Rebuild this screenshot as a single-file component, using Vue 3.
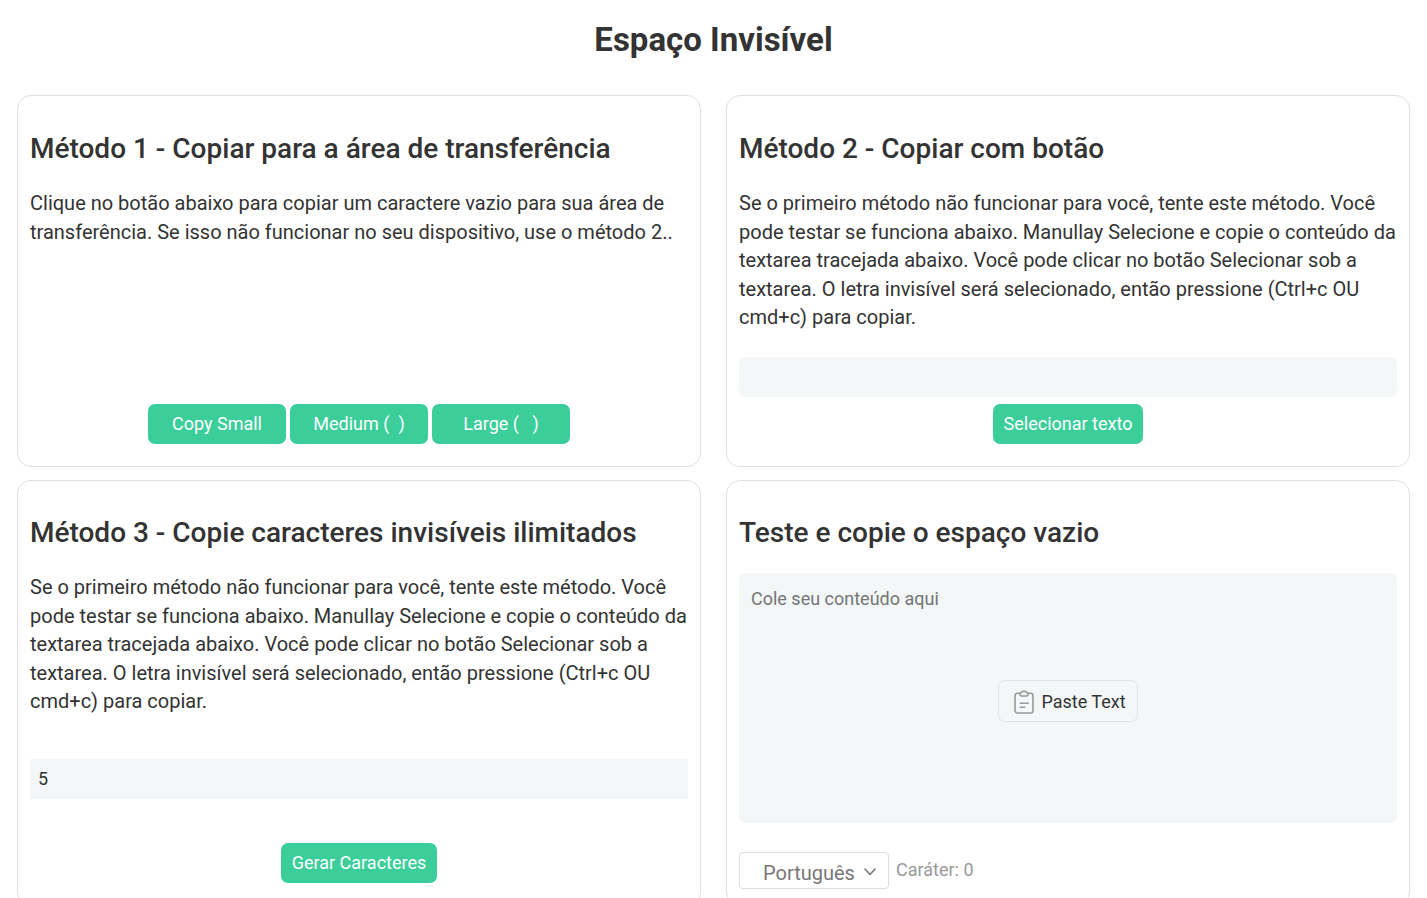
<script setup>
import { ref, computed } from 'vue'

const amount = ref('5')
const content = ref('')
const invisible = ref('\u3164')
const language = ref('pt')
const count = computed(() => content.value.length)
const field = ref(null)

const sizes = [
  { label: 'Copy Small', value: '\u3164' },
  { label: 'Medium (\u00a0\u00a0)', value: '\u3164\u3164' },
  { label: 'Large (\u00a0\u00a0\u00a0)', value: '\u3164\u3164\u3164' },
]

const intro =
  'Se o primeiro método não funcionar para você, tente este método. Você pode testar se funciona abaixo. Manullay Selecione e copie o conteúdo da textarea tracejada abaixo. Você pode clicar no botão Selecionar sob a textarea. O letra invisível será selecionado, então pressione (Ctrl+c OU cmd+c) para copiar.'

function copy(value) {
  navigator.clipboard?.writeText(value)
}
function generate() {
  copy('\u3164'.repeat(Number(amount.value) || 0))
}
async function paste() {
  content.value = (await navigator.clipboard?.readText()) || ''
}
</script>

<template>
  <main class="page">
    <h1>Espaço Invisível</h1>
    <div class="cards">
      <section class="card">
        <h2>Método 1 - Copiar para a área de transferência</h2>
        <p>
          Clique no botão abaixo para copiar um caractere vazio para sua área de
          transferência. Se isso não funcionar no seu dispositivo, use o método 2..
        </p>
        <div class="actions bottom">
          <button
            v-for="size in sizes"
            :key="size.label"
            type="button"
            class="btn sized"
            @click="copy(size.value)"
          >{{ size.label }}</button>
        </div>
      </section>

      <section class="card">
        <h2>Método 2 - Copiar com botão</h2>
        <p>{{ intro }}</p>
        <input
          ref="field"
          v-model="invisible"
          class="field rounded spaced"
          type="text"
          readonly
          aria-label="Letra invisível"
        />
        <div class="actions near">
          <button type="button" class="btn" @click="field.select()">Selecionar texto</button>
        </div>
      </section>

      <section class="card lower">
        <h2>Método 3 - Copie caracteres invisíveis ilimitados</h2>
        <p>{{ intro }}</p>
        <input v-model="amount" class="field far" type="text" aria-label="Quantidade" />
        <div class="actions">
          <button type="button" class="btn" @click="generate">Gerar Caracteres</button>
        </div>
      </section>

      <section class="card lower">
        <h2>Teste e copie o espaço vazio</h2>
        <div class="tester">
          <textarea
            v-model="content"
            placeholder="Cole seu conteúdo aqui"
            aria-label="Teste"
          ></textarea>
          <button type="button" class="paste" @click="paste">
            <svg viewBox="0 0 20 24" width="20" height="24" aria-hidden="true">
              <path d="M5 3.2H3.4A2.4 2.4 0 0 0 1 5.6v15A2.4 2.4 0 0 0 3.4 23h13.2a2.4 2.4 0 0 0 2.4-2.4v-15a2.4 2.4 0 0 0-2.400-2.400H15" />
              <path d="M5.200 3.600L8.600 1.500Q10 .6 11.400 1.500L14.800 3.600L13.300 5.600Q12.900 6 12.300 6H7.700Q7.100 6 6.700 5.600z" />
              <path d="M6.3 13.2h7.9M6.3 17.2h4.4" />
            </svg>
            <span>Paste Text</span>
          </button>
        </div>
        <div class="footer">
          <div class="language">
            <select v-model="language" aria-label="Idioma">
              <option value="pt">Português</option>
              <option value="en">English</option>
              <option value="es">Español</option>
            </select>
            <svg viewBox="0 0 12 8" width="12" height="8" aria-hidden="true">
              <path d="M1 1l5 5.5L11 1" />
            </svg>
          </div>
          <span class="count">Caráter: {{ count }}</span>
        </div>
      </section>
    </div>
  </main>
</template>

<style>
body {
  background: #fff;
}
</style>

<style scoped>
.page {
  box-sizing: border-box;
  padding: 16px 17px;
  font-family: Roboto, "Liberation Sans", sans-serif;
  color: #333;
}
.page * {
  box-sizing: border-box;
}
h1 {
  margin: 0 0 31px;
  font-size: 33px;
  line-height: 48px;
  font-weight: 700;
  text-align: center;
}
.cards {
  display: grid;
  grid-template-columns: repeat(2, minmax(0, 1fr));
  gap: 13px 25px;
}
.card {
  display: flex;
  flex-direction: column;
  border: 1px solid #e0e0e0;
  border-radius: 14px;
  padding: 36px 12px 22px;
}
.lower {
  padding: 35px 12px 16px;
}
h2 {
  margin: 0 0 23px;
  font-size: 28px;
  line-height: 34px;
  font-weight: 500;
}
p {
  margin: 0;
  font-size: 20px;
  line-height: 1.43;
}
.actions {
  display: flex;
  justify-content: center;
  gap: 4px;
}
.bottom {
  margin-top: auto;
}
.near {
  margin-top: 7px;
}
.btn {
  height: 40px;
  border: 0;
  border-radius: 7px;
  padding: 0 11px;
  background: #3bce9b;
  color: #fff;
  font: 400 18px Roboto, "Liberation Sans", sans-serif;
}
.sized {
  width: 138px;
}
.field {
  width: 100%;
  height: 40px;
  border: 0;
  padding: 0 8px;
  background: #f3f7f8;
  color: #333;
  font: 400 18px Roboto, "Liberation Sans", sans-serif;
}
.rounded {
  border-radius: 7px;
}
.spaced {
  margin-top: 25px;
}
.far {
  margin: 43px 0 44px;
}
.tester {
  display: grid;
  place-items: center;
}
.tester > * {
  grid-area: 1 / 1;
}
textarea {
  display: block;
  width: 100%;
  height: 250px;
  border: 0;
  border-radius: 7px;
  padding: 12px;
  resize: none;
  background: #f3f7f8;
  color: #333;
  font: 400 18px/27px Roboto, "Liberation Sans", sans-serif;
}
textarea::placeholder {
  color: #757575;
}
.paste {
  display: flex;
  align-items: center;
  gap: 7px;
  height: 42px;
  margin-top: 6px;
  border: 1px solid #e0e2e3;
  border-radius: 7px;
  padding: 2px 11px 0 15px;
  background: transparent;
  color: #333;
  font: 400 18px Roboto, "Liberation Sans", sans-serif;
}
svg {
  fill: none;
  stroke: #999;
  stroke-width: 1.6;
  stroke-linecap: round;
  stroke-linejoin: round;
}
.footer {
  display: flex;
  align-items: center;
  gap: 7px;
  margin-top: 29px;
}
.language {
  display: grid;
  align-items: center;
  width: 150px;
}
.language > * {
  grid-area: 1 / 1;
}
.language svg {
  justify-self: end;
  margin: 4px 13px 0 0;
  stroke: #777;
  pointer-events: none;
}
select {
  appearance: none;
  width: 100%;
  height: 37px;
  border: 1px solid #ddd;
  border-radius: 4px;
  padding: 5px 24px 0 23px;
  background: #fff;
  color: #777;
  font: 400 20px Roboto, "Liberation Sans", sans-serif;
}
.count {
  color: #999;
  font-size: 18px;
  line-height: 24px;
}
</style>
